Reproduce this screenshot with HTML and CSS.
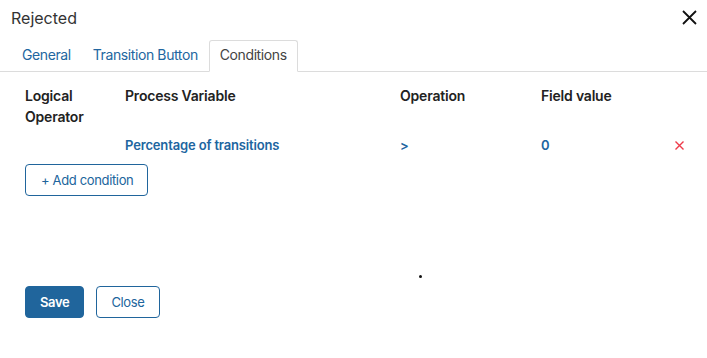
FILE: index.html
```html
<!DOCTYPE html>
<html>
<head>
<meta charset="utf-8">
<link rel="stylesheet" href="styles.css">
</head>
<body>
<div class="dialog">
  <div class="header">
    <div class="title">Rejected</div>
    <button class="close-x" aria-label="Close">
      <svg width="15" height="15" viewBox="0 0 15 15"><path d="M1 1 L14 14 M14 1 L1 14" stroke="#111" stroke-width="1.8" fill="none"/></svg>
    </button>
  </div>
  <ul class="tabs">
    <li class="tab">General</li>
    <li class="tab">Transition Button</li>
    <li class="tab active">Conditions</li>
  </ul>
  <div class="body">
    <div class="grid">
      <div class="th">Logical<br>Operator</div>
      <div class="th">Process Variable</div>
      <div class="th">Operation</div>
      <div class="th">Field value</div>
      <div class="th"></div>
      <div class="td"></div>
      <div class="td link">Percentage of transitions</div>
      <div class="td link">&gt;</div>
      <div class="td link">0</div>
      <div class="td remove">
        <svg width="9" height="9" viewBox="0 0 9 9"><path d="M0.5 0.5 L8.5 8.5 M8.5 0.5 L0.5 8.5" stroke="#ee3b4a" stroke-width="1.4" fill="none"/></svg>
      </div>
    </div>
    <button class="btn btn-outline add">+ Add condition</button>
  </div>
  <div class="footer">
    <button class="btn btn-primary">Save</button>
    <button class="btn btn-outline">Close</button>
  </div>
  <span class="dot"></span>
</div>
</body>
</html>
```
FILE: styles.css
```css
* { box-sizing: border-box; }
html, body { margin: 0; padding: 0; background: #fff; }
body {
  font-family: Inter, "Noto Sans", "Liberation Sans", sans-serif;
  font-size: 14px;
  line-height: 20px;
  color: #222;
}
.dialog { position: relative; width: 707px; height: 358px; }
.header {
  display: flex;
  justify-content: space-between;
  align-items: flex-start;
  padding: 8px 10px 0 11px;
  height: 40px;
}
.title { font-size: 16px; line-height: 20px; color: #333; }
.close-x {
  border: 0; background: none; padding: 0; margin-top: 2px;
  width: 15px; height: 15px; display: block; cursor: pointer;
}
.close-x svg { display: block; }
.tabs {
  list-style: none;
  margin: 0;
  padding: 0 0 0 11px;
  display: flex;
  border-bottom: 1px solid #dcdcdc;
}
.tab {
  padding: 4px 10px 6px;
  border: 1px solid transparent;
  border-radius: 3px 3px 0 0;
  margin-bottom: -1px;
  color: #2266a0;
  line-height: 20px;
  letter-spacing: -0.4px;
}
.tab.active {
  color: #444;
  background: #fff;
  border-color: #dcdcdc #dcdcdc #fff;
}
.body { padding: 13px 23px 0 25px; }
.grid {
  display: grid;
  grid-template-columns: 100px 275px 141px 1fr 9px;
  row-gap: 8px;
  align-items: center;
  line-height: 21px;
}
.th { font-weight: 600; color: #222; align-self: start; letter-spacing: -0.2px; }
.td.link { color: #20659f; font-weight: 600; font-size: 13px; letter-spacing: -0.15px; }
.remove { display: flex; align-items: center; }
.remove svg { display: block; }
.btn {
  font-family: inherit;
  font-size: 13px;
  letter-spacing: -0.35px;
  line-height: 20px;
  height: 32px;
  padding: 5px 14px;
  border-radius: 4px;
  border: 1px solid #20659c;
  cursor: pointer;
}
.btn-outline { background: #fff; color: #20659c; }
.btn-primary { background: #20659c; color: #fff; font-weight: 600; }
.add { margin-top: 8px; padding-left: 15px; }
.footer {
  padding: 0 0 0 25px;
  margin-top: 90px;
  display: flex;
  gap: 12px;
}
.dot {
  position: absolute;
  left: 419px;
  top: 275px;
  width: 3px;
  height: 3px;
  border-radius: 50%;
  background: #111;
}
```
